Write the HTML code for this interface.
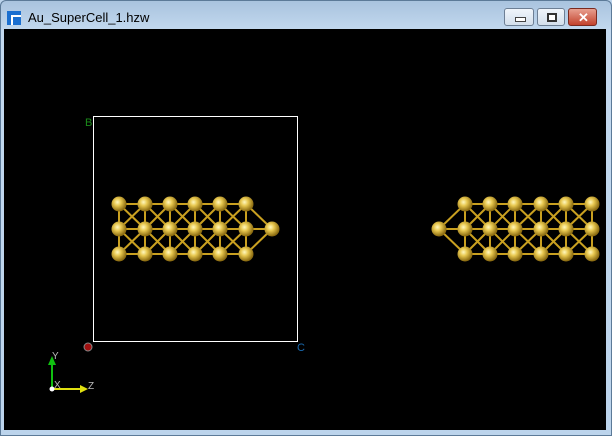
<!DOCTYPE html>
<html><head><style>
body{margin:0;width:612px;height:436px;overflow:hidden;background:#bcd4ec;font-family:"Liberation Sans",sans-serif}
.win{position:absolute;left:0;top:0;width:612px;height:436px;background:linear-gradient(#a9c3de,#c3d9ef 30px,#bcd4ec);border:1px solid #5c7a98;box-sizing:border-box;border-radius:6px 6px 0 0}
.title{position:absolute;left:27px;top:9px;font-size:13px;color:#000}
.vp{position:absolute;left:3px;top:28px;width:602px;height:401px;background:#000}
.btn{position:absolute;top:7px;height:18px;border:1px solid #6d7f95;border-radius:3px;box-sizing:border-box;background:linear-gradient(#f0f5fb,#d3dfec)}
</style></head><body>
<div class="win">
<svg style="position:absolute;left:6px;top:10px" width="14" height="14"><rect width="14" height="14" fill="#1a6fd0"/><rect x="4" y="4" width="10" height="10" fill="#fff"/><rect x="6" y="6" width="8" height="8" fill="#1a6fd0"/></svg>
<div class="title">Au_SuperCell_1.hzw</div>
<div class="btn" style="left:503px;width:30px"><div style="position:absolute;left:10px;top:8px;width:9px;height:3px;background:#fff;border:1px solid #444"></div></div>
<div class="btn" style="left:536px;width:28px"><div style="position:absolute;left:9px;top:4px;width:6px;height:5px;border:2px solid #333;background:#fff"></div></div>
<div class="btn" style="left:567px;width:29px;background:linear-gradient(#e8a090,#c2412c);border-color:#7a2a20"><div style="position:absolute;left:9px;top:1px;color:#fff;font-weight:bold;font-size:13px">✕</div></div>
<div class="vp"></div>
<svg style="position:absolute;left:-1px;top:-1px" width="612" height="436">
<defs><radialGradient id="g" cx="40%" cy="38%" r="60%"><stop offset="0" stop-color="#fff8c0"/><stop offset=".4" stop-color="#e8c850"/><stop offset="1" stop-color="#8a6a10"/></radialGradient></defs>
<rect x="93.5" y="116.5" width="204" height="225" fill="none" stroke="#fff" stroke-width="1"/>
<text x="85" y="126" font-size="11" fill="#1a8a1a">B</text>
<text x="297" y="351" font-size="11" fill="#1a6ab0">C</text>
<circle cx="88" cy="347" r="4" fill="#a01010" stroke="#888"/>
<g stroke="#c9a020" stroke-width="2" fill="none">
<path d="M119 204L246 204M119 229L272 229M119 254L246 254M119 204V254M145 204V254M170 204V254M195 204V254M220 204V254M246 204V254M119 204L145 229M145 204L119 229M145 204L170 229M170 204L145 229M170 204L195 229M195 204L170 229M195 204L220 229M220 204L195 229M220 204L246 229M246 204L220 229M119 229L145 254M145 229L119 254M145 229L170 254M170 229L145 254M170 229L195 254M195 229L170 254M195 229L220 254M220 229L195 254M220 229L246 254M246 229L220 254M246 204L272 229L246 254"/>
<path d="M465 204L592 204M439 229L592 229M465 254L592 254M465 204V254M490 204V254M515 204V254M541 204V254M566 204V254M592 204V254M465 204L490 229M490 204L465 229M490 204L515 229M515 204L490 229M515 204L541 229M541 204L515 229M541 204L566 229M566 204L541 229M566 204L592 229M592 204L566 229M465 229L490 254M490 229L465 254M490 229L515 254M515 229L490 254M515 229L541 254M541 229L515 254M541 229L566 254M566 229L541 254M566 229L592 254M592 229L566 254M465 204L439 229L465 254"/>
</g>
<g fill="url(#g)">
<circle cx="119" cy="204" r="7.5"/><circle cx="145" cy="204" r="7.5"/><circle cx="170" cy="204" r="7.5"/><circle cx="195" cy="204" r="7.5"/><circle cx="220" cy="204" r="7.5"/><circle cx="246" cy="204" r="7.5"/>
<circle cx="119" cy="229" r="7.5"/><circle cx="145" cy="229" r="7.5"/><circle cx="170" cy="229" r="7.5"/><circle cx="195" cy="229" r="7.5"/><circle cx="220" cy="229" r="7.5"/><circle cx="246" cy="229" r="7.5"/><circle cx="272" cy="229" r="7.5"/>
<circle cx="119" cy="254" r="7.5"/><circle cx="145" cy="254" r="7.5"/><circle cx="170" cy="254" r="7.5"/><circle cx="195" cy="254" r="7.5"/><circle cx="220" cy="254" r="7.5"/><circle cx="246" cy="254" r="7.5"/>
<circle cx="465" cy="204" r="7.5"/><circle cx="490" cy="204" r="7.5"/><circle cx="515" cy="204" r="7.5"/><circle cx="541" cy="204" r="7.5"/><circle cx="566" cy="204" r="7.5"/><circle cx="592" cy="204" r="7.5"/>
<circle cx="439" cy="229" r="7.5"/><circle cx="465" cy="229" r="7.5"/><circle cx="490" cy="229" r="7.5"/><circle cx="515" cy="229" r="7.5"/><circle cx="541" cy="229" r="7.5"/><circle cx="566" cy="229" r="7.5"/><circle cx="592" cy="229" r="7.5"/>
<circle cx="465" cy="254" r="7.5"/><circle cx="490" cy="254" r="7.5"/><circle cx="515" cy="254" r="7.5"/><circle cx="541" cy="254" r="7.5"/><circle cx="566" cy="254" r="7.5"/><circle cx="592" cy="254" r="7.5"/>
</g>
<line x1="52" y1="389" x2="52" y2="363" stroke="#10c010" stroke-width="2"/>
<polygon points="48,365 56,365 52,356" fill="#10c010"/>
<line x1="52" y1="389" x2="82" y2="389" stroke="#e0e010" stroke-width="2"/>
<polygon points="80,385 80,393 88,389" fill="#e0e010"/>
<circle cx="52" cy="389" r="2.5" fill="#fff"/>
<text x="52" y="359" font-size="10" fill="#bbb">Y</text>
<text x="54" y="388" font-size="10" fill="#bbb">X</text>
<text x="88" y="389" font-size="10" fill="#bbb">Z</text>
</svg>
</div>
</body></html>
